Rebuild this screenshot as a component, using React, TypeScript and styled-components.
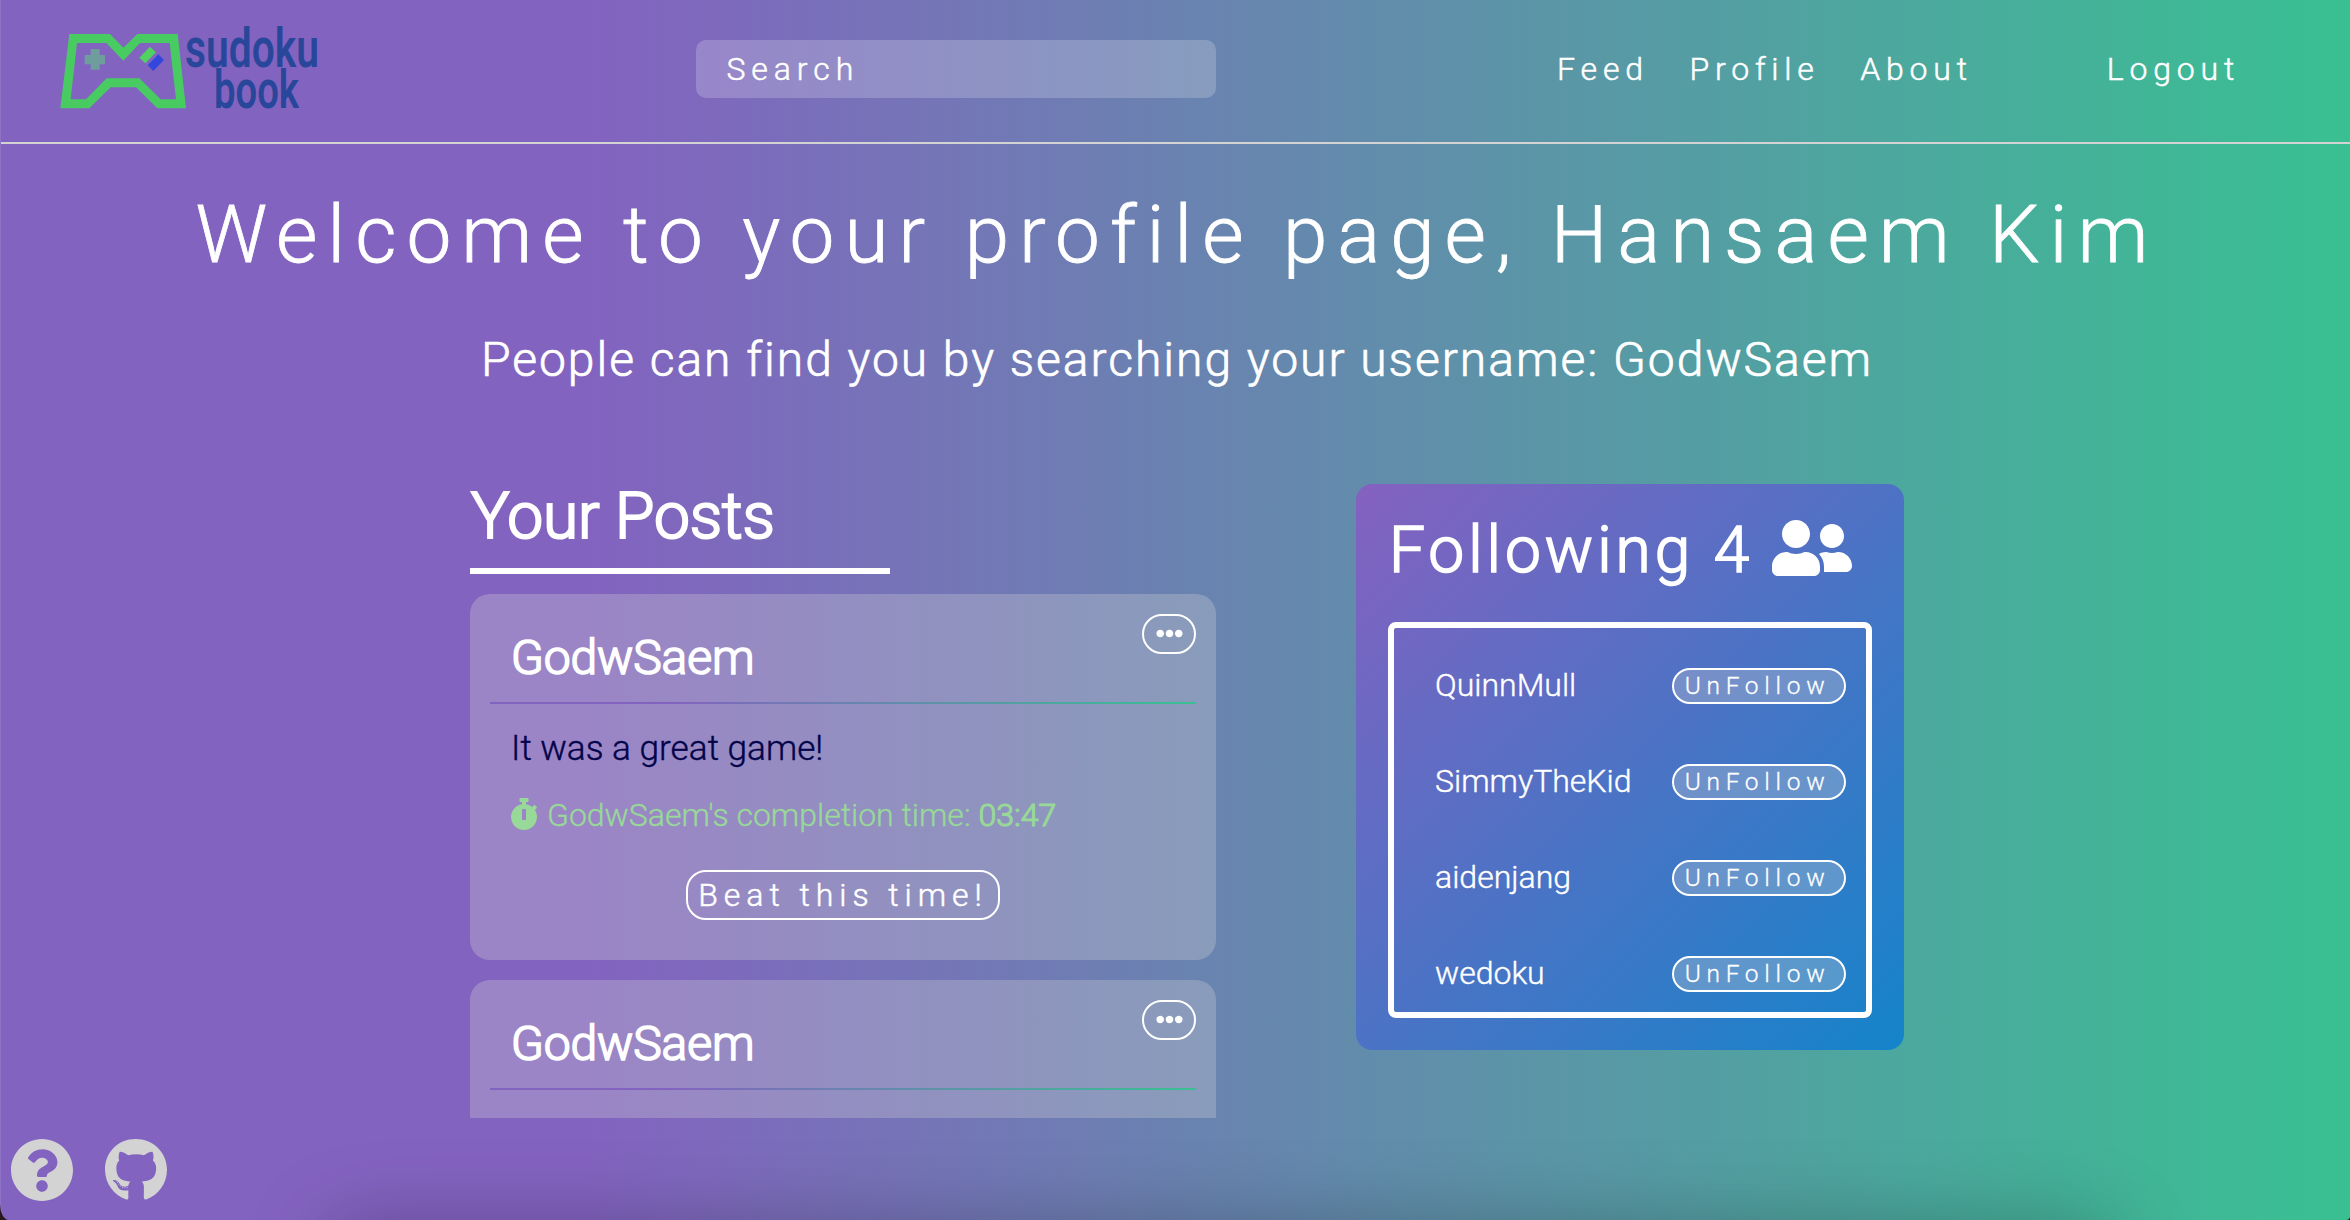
import React from 'react';
import styled, { createGlobalStyle } from 'styled-components';
import { FaEllipsisH, FaGithub, FaQuestionCircle, FaStopwatch, FaUserFriends } from 'react-icons/fa';

const GlobalStyle = createGlobalStyle`
  * { box-sizing: border-box; }
  body { margin: 0; background: #261a1c; }
`;

const Page = styled.div`
  position: relative;
  display: flex;
  flex-direction: column;
  width: 2350px;
  height: 1220px;
  overflow: hidden;
  border-left: 1px solid #8d72c5;
  border-radius: 0 0 4px 9px / 0 0 4px 16px;
  background: linear-gradient(to right, #8363c0 25%, #39c092 100%);
  color: #fff;
  font-family: Roboto, 'Open Sans', sans-serif;
  font-weight: 300;
  -webkit-text-stroke: 0.4px currentColor;
`;

const Header = styled.header`
  display: flex;
  align-items: center;
  height: 144px;
  flex: none;
  padding: 0 110px 4px 59px;
  border-bottom: 2px solid lightgray;
`;

const Logo = styled.svg`
  width: 260px;
  height: 86px;
  margin: 0 376px 4px 0;
  flex: none;
  overflow: visible;
`;

const SearchBox = styled.input`
  width: 520px;
  height: 58px;
  padding: 0 30.5px;
  border: 0;
  border-radius: 10px;
  outline: none;
  background: rgba(255, 255, 255, 0.2);
  color: #fff;
  font: 300 32px Roboto, sans-serif;
  letter-spacing: 5.9px;
  -webkit-text-stroke: 0.5px #fff;
  &::placeholder { color: #fff; opacity: 1; }
`;

const Nav = styled.nav`
  display: flex;
  gap: 40.6px;
  margin-left: auto;
`;

const NavLink = styled.a<{ $apart?: boolean }>`
  margin-left: ${p => (p.$apart ? '93.4px' : '0')};
  font-size: 32px;
  line-height: 40px;
  letter-spacing: 5.8px;
  -webkit-text-stroke-width: 0.5px;
`;

const Hero = styled.section`
  display: flex;
  flex-direction: column;
  align-items: center;
  gap: 50px;
  padding: 44px 0 91px 3px;
`;

const Title = styled.h1`
  margin: 0;
  font-size: 80px;
  font-weight: 300;
  line-height: 94px;
  letter-spacing: 9.96px;
  white-space: nowrap;
  -webkit-text-stroke-width: 0.8px;
`;

const Subtitle = styled.h2`
  margin: 0;
  font-size: 48px;
  font-weight: 300;
  line-height: 56px;
  letter-spacing: 1.98px;
  -webkit-text-stroke-width: 0.7px;
`;

const Columns = styled.main`
  display: flex;
  align-items: flex-start;
  gap: 140px;
  padding-left: 469px;
`;

const Posts = styled.section`
  width: 746px;
`;

const PostsHeading = styled.h2`
  width: 420px;
  height: 95px;
  margin: 0 0 20px;
  padding-left: 1px;
  border-bottom: 6px solid #fff;
  font-size: 64px;
  font-weight: 300;
  line-height: 76px;
  letter-spacing: -0.1px;
  -webkit-text-stroke: 2.2px #fff;
`;

const PostList = styled.div`
  display: flex;
  flex-direction: column;
  gap: 20px;
  height: 524px;
  overflow: hidden;
`;

const Card = styled.article`
  display: flex;
  flex-direction: column;
  flex: none;
  height: 366px;
  padding: 20px;
  border-radius: 20px;
  background: rgba(211, 211, 211, 0.3);
`;

const CardHead = styled.div`
  display: flex;
  justify-content: space-between;
  align-items: flex-start;
  height: 88px;
  padding-left: 21px;
`;

const Author = styled.h3`
  margin: 16px 0 0;
  font-size: 48px;
  font-weight: 300;
  line-height: 56px;
  letter-spacing: -0.1px;
  -webkit-text-stroke: 1.7px #fff;
`;

const MenuButton = styled.button`
  display: flex;
  align-items: center;
  justify-content: center;
  width: 54px;
  height: 40px;
  padding: 0 0 2px;
  border: 2px solid #fff;
  border-radius: 20px;
  background: transparent;
  color: #fff;
  font-size: 27px;
`;

const Divider = styled.div`
  height: 2px;
  flex: none;
  background: linear-gradient(to right, #8363c0 25%, #39c092 100%);
`;

const CardBody = styled.div`
  display: flex;
  flex-direction: column;
  padding: 23px 21px 0;
`;

const Message = styled.p`
  margin: 0;
  color: #03034a;
  font-size: 35.2px;
  line-height: 42px;
`;

const Completion = styled.p`
  display: flex;
  align-items: center;
  gap: 7px;
  margin: 27px 0 36px -3px;
  color: #98d898;
  font-size: 32px;
  line-height: 38px;
  svg { margin-bottom: 2px; }
  b { font-weight: 300; -webkit-text-stroke: 1.2px #98d898; }
`;

const BeatButton = styled.button`
  align-self: center;
  width: 314px;
  height: 50px;
  padding: 0 0 1px;
  border: 2px solid #fff;
  border-radius: 20px;
  background: transparent;
  color: #fff;
  font: 300 32px Roboto, sans-serif;
  letter-spacing: 5.95px;
  white-space: nowrap;
  -webkit-text-stroke: 0.5px #fff;
`;

const FollowPanel = styled.aside`
  width: 548px;
  height: 566px;
  margin-top: 5px;
  padding: 29px 32px 32px;
  border-radius: 16px;
  background: linear-gradient(135deg, #8561c0, #1484ca);
`;

const FollowHeading = styled.h2`
  display: flex;
  gap: 19px;
  margin: 0 0 33px 1px;
  font-size: 64px;
  font-weight: 300;
  line-height: 76px;
  letter-spacing: 4px;
  -webkit-text-stroke: 1.7px #fff;
  svg { width: 80px; height: 64px; margin-top: 3px; stroke: none; }
`;

const FollowList = styled.ul`
  display: flex;
  flex-direction: column;
  gap: 60px;
  height: 396px;
  margin: 0;
  padding: 40px 20px 0 41px;
  border: 6px solid #fff;
  border-radius: 8px;
  list-style: none;
`;

const FollowRow = styled.li`
  display: flex;
  align-items: center;
  justify-content: space-between;
  height: 36px;
  font-size: 32px;
  line-height: 34px;
`;

const FollowName = styled.span`
  padding-bottom: 2px;
`;

const UnfollowButton = styled.button`
  width: 174px;
  height: 36px;
  padding: 0 3px 1px 0;
  border: 2px solid #fff;
  border-radius: 18px;
  background: rgba(211, 211, 211, 0.3);
  color: #fff;
  font: 300 24.5px Roboto, sans-serif;
  letter-spacing: 5.7px;
  -webkit-text-stroke: 0.3px #fff;
`;

const FooterLinks = styled.footer`
  position: absolute;
  left: 9px;
  bottom: 18px;
  display: flex;
  gap: 30px;
  color: lightgray;
  font-size: 64px;
  svg { display: block; }
`;

const DockShade = styled.div`
  position: absolute;
  top: 1228px;
  left: 330px;
  right: 240px;
  height: 120px;
  box-shadow: 0 0 84px rgba(0, 0, 0, 0.28);
`;

const posts: { author: string; message?: string; time?: string }[] = [
  { author: 'GodwSaem', message: 'It was a great game!', time: '03:47' },
  { author: 'GodwSaem' },
];

const following = ['QuinnMull', 'SimmyTheKid', 'aidenjang', 'wedoku'];

function BrandLogo() {
  return (
    <Logo viewBox="60 24 260 86" aria-label="sudoku book">
      <g transform="scale(.33333)">
        <path
          fill="#48cc62"
          fillRule="evenodd"
          d="M208 102H330L370 143L412 102H533L558 325H472L408 262H332L268 325H181ZM231 129H319L370 182L420 129H509L528 298H482L418 235H320L258 298H212Z"
        />
        <path fill="#6f9c9c" d="M272 147h27v18h16v28h-16v16h-27v-16h-18v-28h18z" />
        <path fill="#4fd260" d="M450 140l18 17-32 33-18-17z" />
        <path fill="#3447dc" d="M475 163l17 17-32 33-17-17z" />
      </g>
      <g fill="#28479b" fontFamily="Roboto, sans-serif" fontWeight="600">
        <text x="185" y="67" fontSize="56" textLength="134" lengthAdjust="spacingAndGlyphs">sudoku</text>
        <text x="214" y="108" fontSize="53" textLength="85" lengthAdjust="spacingAndGlyphs">book</text>
      </g>
    </Logo>
  );
}

export default function App() {
  return (
    <>
      <GlobalStyle />
      <Page>
        <Header>
          <BrandLogo />
          <SearchBox placeholder="Search" />
          <Nav>
            <NavLink>Feed</NavLink>
            <NavLink>Profile</NavLink>
            <NavLink>About</NavLink>
            <NavLink $apart>Logout</NavLink>
          </Nav>
        </Header>
        <Hero>
          <Title>Welcome to your profile page, Hansaem Kim</Title>
          <Subtitle>People can find you by searching your username: GodwSaem</Subtitle>
        </Hero>
        <Columns>
          <Posts>
            <PostsHeading>Your Posts</PostsHeading>
            <PostList>
              {posts.map((post, i) => (
                <Card key={i}>
                  <CardHead>
                    <Author>{post.author}</Author>
                    <MenuButton aria-label="Post options"><FaEllipsisH /></MenuButton>
                  </CardHead>
                  <Divider />
                  {post.message && (
                    <CardBody>
                      <Message>{post.message}</Message>
                      <Completion>
                        <FaStopwatch />
                        <span>{post.author}'s completion time: <b>{post.time}</b></span>
                      </Completion>
                      <BeatButton>Beat this time!</BeatButton>
                    </CardBody>
                  )}
                </Card>
              ))}
            </PostList>
          </Posts>
          <FollowPanel>
            <FollowHeading>Following {following.length}<FaUserFriends /></FollowHeading>
            <FollowList>
              {following.map(name => (
                <FollowRow key={name}>
                  <FollowName>{name}</FollowName>
                  <UnfollowButton>UnFollow</UnfollowButton>
                </FollowRow>
              ))}
            </FollowList>
          </FollowPanel>
        </Columns>
        <DockShade />
        <FooterLinks>
          <FaQuestionCircle />
          <FaGithub />
        </FooterLinks>
      </Page>
    </>
  );
}
